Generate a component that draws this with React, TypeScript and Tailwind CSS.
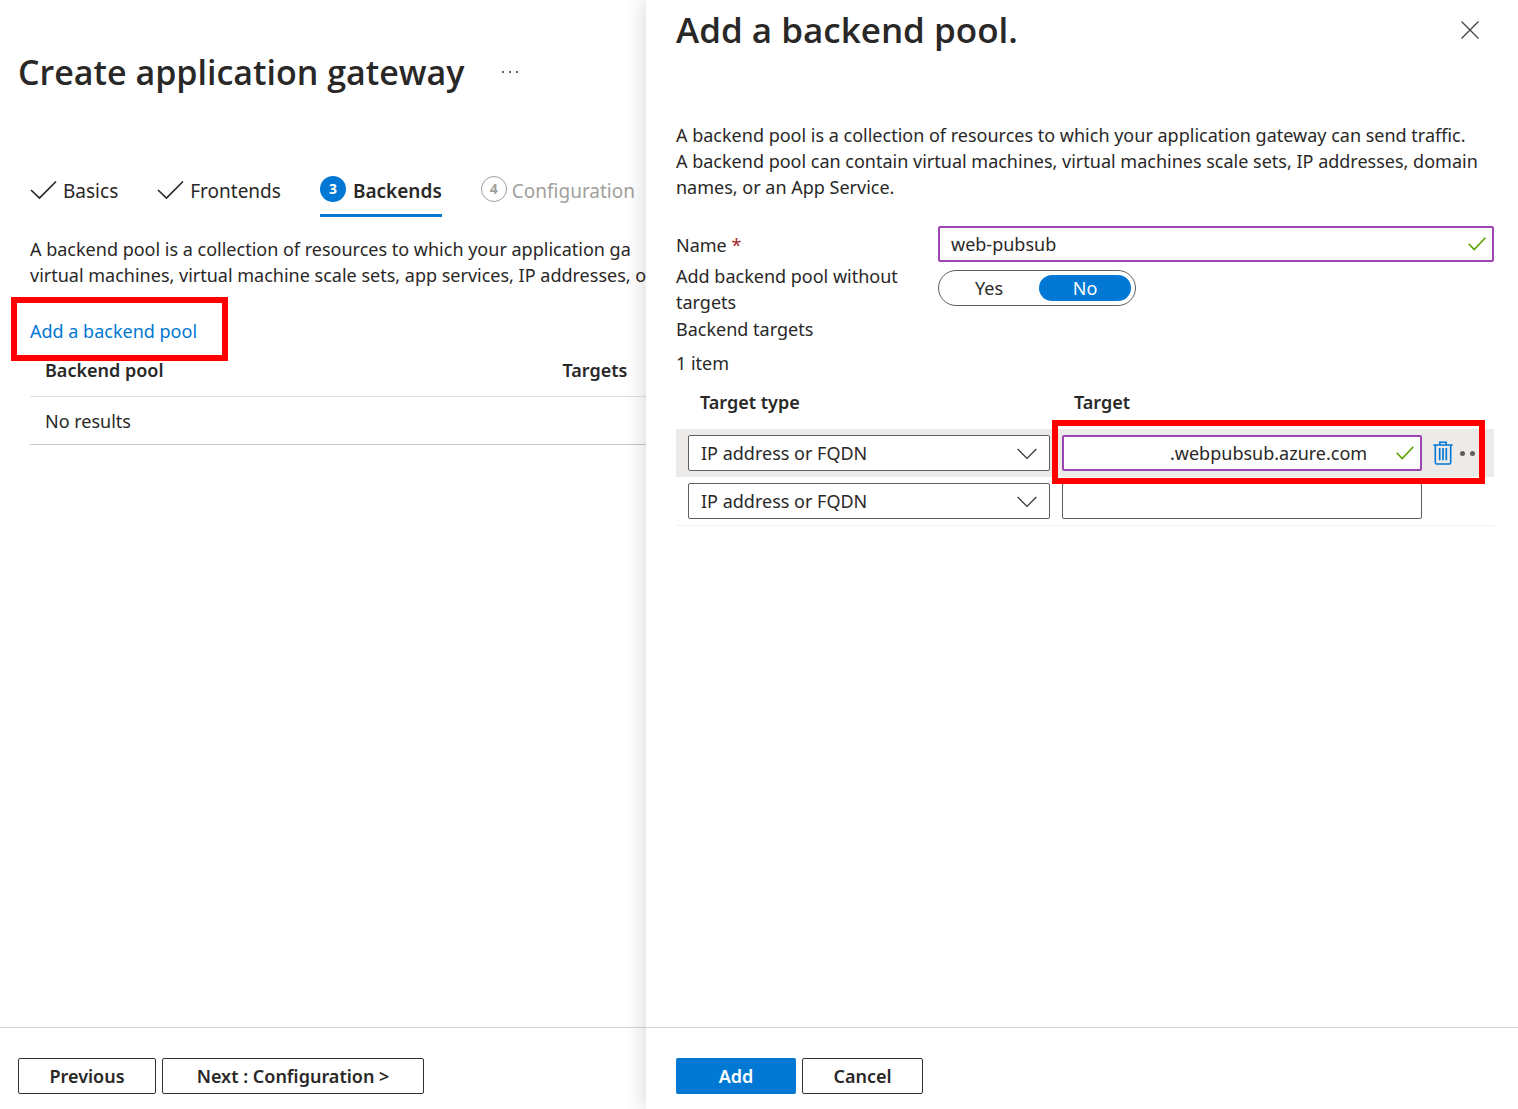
import React, { useState } from "react";

const CheckMark = ({ className }: { className: string }) => (
  <svg viewBox="0 0 28 20" className={className} fill="none" aria-hidden="true">
    <path d="M1 10L9.5 18L26 1.5" stroke="currentColor" strokeWidth="1.7" />
  </svg>
);

const ValidMark = () => (
  <svg
    viewBox="0 0 18 14"
    className="absolute right-2 top-[11px] h-[14px] w-[18px] text-[#57a300]"
    fill="none"
    aria-hidden="true"
  >
    <path d="M0.7 6.8L6.2 12.5L17.3 0.8" stroke="currentColor" strokeWidth="1.6" />
  </svg>
);

const TrashIcon = () => (
  <svg viewBox="0 0 20 24" className="h-6 w-5" fill="none" aria-hidden="true">
    <path
      d="M0.3 4H19.7M6.8 4V1.2H13.2V4M2.3 4V21.6Q2.3 23 3.7 23H16.3Q17.7 23 17.7 21.6V4"
      stroke="#0078d4"
      strokeWidth="1.6"
    />
    <path d="M6.7 7V19.3M10 7V19.3M13.3 7V19.3" stroke="#0078d4" strokeWidth="1.7" />
  </svg>
);

const TypeSelect = ({ label }: { label: string }) => (
  <div className="relative">
    <select
      aria-label={label}
      className="block h-9 w-full appearance-none rounded-xs border border-[#605e5c] bg-white pl-3 pr-10"
    >
      <option>IP address or FQDN</option>
      <option>Virtual machine</option>
      <option>VMSS</option>
      <option>App Services</option>
    </select>
    <svg
      viewBox="0 0 20 12"
      className="pointer-events-none absolute right-[13px] top-[13px] h-3 w-5"
      fill="none"
      aria-hidden="true"
    >
      <path d="M0.7 1L10 10.3L19.3 1" stroke="#323130" strokeWidth="1.2" />
    </svg>
  </div>
);

const GatewayPage = () => (
  <main className="flex min-w-0 flex-1 flex-col overflow-hidden">
    <header className="flex items-center gap-[38px] pl-[18px] pt-12">
      <h1 className="whitespace-nowrap font-['Open_Sans',sans-serif] text-[34px] font-semibold leading-[48px]">
        Create application gateway
      </h1>
      <button type="button" aria-label="More" className="flex gap-[5px]">
        <span className="size-[2px] rounded-full bg-[#323130]" />
        <span className="size-[2px] rounded-full bg-[#323130]" />
        <span className="size-[2px] rounded-full bg-[#323130]" />
      </button>
    </header>

    <div className="flex-1 pl-[30px] pt-[78px]">
      <nav className="flex gap-[39px] whitespace-nowrap text-[19px]">
        <a href="#basics" className="flex h-[43px] gap-[5px] pt-1">
          <CheckMark className="mt-[2px] h-5 w-7" />
          Basics
        </a>
        <a href="#frontends" className="flex h-[43px] gap-[5px] pt-1">
          <CheckMark className="mt-[2px] h-5 w-7" />
          Frontends
        </a>
        <a
          href="#backends"
          className="flex h-[43px] gap-[7px] border-b-3 border-[#0078d4] pt-1 font-semibold"
        >
          <span className="-mt-[2px] flex size-[26px] items-center justify-center rounded-full bg-[#0078d4] text-[14px] font-bold text-white">
            3
          </span>
          Backends
        </a>
        <a href="#configuration" className="flex h-[43px] gap-[5px] pt-1 text-[#a19f9d]">
          <span className="-mt-[2px] flex size-[26px] items-center justify-center rounded-full border border-[#a19f9d] text-[14px] font-bold">
            4
          </span>
          Configuration
        </a>
      </nav>

      <p className="mt-[19px] whitespace-nowrap">
        A backend pool is a collection of resources to which your application ga
        <br />
        virtual machines, virtual machine scale sets, app services, IP addresses, o
      </p>

      <div className="relative z-10 -ml-[19px] mt-[9px] flex h-16 w-[217px] items-center border-6 border-[#ff0000] pl-[13px] pt-1">
        <a href="#add-pool" className="text-[#0078d4]">
          Add a backend pool
        </a>
      </div>

      <table className="-mt-[5px] w-full table-fixed text-left">
        <thead>
          <tr className="h-10 border-b border-[#e1dfdd]">
            <th className="w-[84%] pb-3 pl-[15px] font-semibold">Backend pool</th>
            <th className="pb-3 pl-[15px] font-semibold">Targets</th>
          </tr>
        </thead>
        <tbody>
          <tr className="h-12 border-b border-[#c8c6c4]">
            <td colSpan={2} className="pl-[15px] pt-[2px]">
              No results
            </td>
          </tr>
        </tbody>
      </table>
    </div>

    <footer className="flex gap-[6px] border-t border-[#d6d4d2] pb-[15px] pl-[18px] pt-[30px] font-semibold">
      <button type="button" className="h-9 w-[138px] rounded-xs border border-[#323130]">
        Previous
      </button>
      <button type="button" className="h-9 w-[262px] rounded-xs border border-[#323130]">
        Next : Configuration &gt;
      </button>
    </footer>
  </main>
);

const PoolPanel = () => {
  const [withoutTargets, setWithoutTargets] = useState(false);

  return (
    <aside className="relative z-20 flex w-[872px] shrink-0 flex-col bg-white shadow-[0_0_22px_rgba(0,0,0,0.18)]">
      <div className="flex-1 pl-[30px] pr-6 pt-[6px]">
        <header className="flex items-center justify-between pr-[15px]">
          <h2 className="font-['Open_Sans',sans-serif] text-[35px] font-semibold leading-[48px]">
            Add a backend pool.
          </h2>
          <button type="button" aria-label="Close">
            <svg viewBox="0 0 18 18" className="size-[18px]" fill="none" aria-hidden="true">
              <path d="M0.5 0.5L17.5 17.5M17.5 0.5L0.5 17.5" stroke="#484644" strokeWidth="1.3" />
            </svg>
          </button>
        </header>

        <p className="mt-[68px]">
          A backend pool is a collection of resources to which your application gateway can send
          traffic.
          <br />A backend pool can contain virtual machines, virtual machines scale sets, IP
          addresses, domain names, or an App Service.
        </p>

        <form className="mt-[26px]">
          <div className="grid grid-cols-[262px_1fr]">
            <label htmlFor="pool-name" className="pt-[6px]">
              Name <span className="text-[#a4262c]">*</span>
            </label>
            <div className="relative">
              <input
                id="pool-name"
                defaultValue="web-pubsub"
                className="block h-9 w-full rounded-xs border-2 border-[#9b45b2] pl-[11px] pr-9"
              />
              <ValidMark />
            </div>

            <span id="without-targets" className="pr-4 pt-px">
              Add backend pool without targets
            </span>
            <div
              role="radiogroup"
              aria-labelledby="without-targets"
              className="mt-2 grid h-9 w-[198px] grid-cols-2 gap-1 rounded-full border border-[#605e5c] p-1 text-center leading-[26px]"
            >
              <label className="relative rounded-full has-checked:bg-[#0078d4] has-checked:text-white">
                <input
                  type="radio"
                  name="without"
                  checked={withoutTargets}
                  onChange={() => setWithoutTargets(true)}
                  className="absolute inset-0 size-full appearance-none"
                />
                Yes
              </label>
              <label className="relative rounded-full has-checked:bg-[#0078d4] has-checked:text-white">
                <input
                  type="radio"
                  name="without"
                  checked={!withoutTargets}
                  onChange={() => setWithoutTargets(false)}
                  className="absolute inset-0 size-full appearance-none"
                />
                No
              </label>
            </div>
          </div>

          <p className="mt-px">Backend targets</p>
          <p className="mt-2">1 item</p>

          <table className="mt-[11px] w-full table-fixed text-left">
            <thead>
              <tr className="h-[42px]">
                <th className="pb-3 pl-6 font-semibold">Target type</th>
                <th className="pb-3 pl-[22px] font-semibold">Target</th>
                <th className="w-[66px]" />
              </tr>
            </thead>
            <tbody>
              <tr className="h-12 bg-[#edebe9]">
                <td className="pl-3 pr-[2px]">
                  <TypeSelect label="Target type 1" />
                </td>
                <td className="relative z-10 pl-[10px] pr-[6px]">
                  <div className="relative">
                    <input
                      aria-label="Target 1"
                      defaultValue=".webpubsub.azure.com"
                      className="block h-9 w-full rounded-xs border-2 border-[#9b45b2] bg-white pl-[106px] pr-9"
                    />
                    <ValidMark />
                  </div>
                  <div className="pointer-events-none absolute -bottom-[7px] -right-[57px] -top-[9px] left-0 border-6 border-[#ff0000]" />
                </td>
                <td className="pl-[5px]">
                  <div className="flex items-center gap-[7px]">
                    <button type="button" aria-label="Delete target">
                      <TrashIcon />
                    </button>
                    <button type="button" aria-label="More options" className="flex gap-[5px]">
                      <span className="size-[5px] rounded-full bg-[#605e5c]" />
                      <span className="size-[5px] rounded-full bg-[#605e5c]" />
                    </button>
                  </div>
                </td>
              </tr>
              <tr className="h-12 border-b border-[#f3f2f1]">
                <td className="pl-3 pr-[2px]">
                  <TypeSelect label="Target type 2" />
                </td>
                <td className="pl-[10px] pr-[6px]">
                  <input
                    aria-label="Target 2"
                    className="block h-9 w-full rounded-xs border border-[#605e5c] px-3"
                  />
                </td>
                <td />
              </tr>
            </tbody>
          </table>
        </form>
      </div>

      <footer className="flex gap-[6px] border-t border-[#d6d4d2] pb-[15px] pl-[30px] pt-[30px] font-semibold">
        <button type="button" className="h-9 w-[120px] rounded-xs bg-[#0078d4] text-white">
          Add
        </button>
        <button type="button" className="h-9 w-[121px] rounded-xs border border-[#323130]">
          Cancel
        </button>
      </footer>
    </aside>
  );
};

const App = () => {
  return (
    <div className="flex min-h-screen overflow-hidden bg-white font-['Noto_Sans',sans-serif] text-[18px] leading-[26px] text-[#292827]">
      <GatewayPage />
      <PoolPanel />
    </div>
  );
};

export default App;
